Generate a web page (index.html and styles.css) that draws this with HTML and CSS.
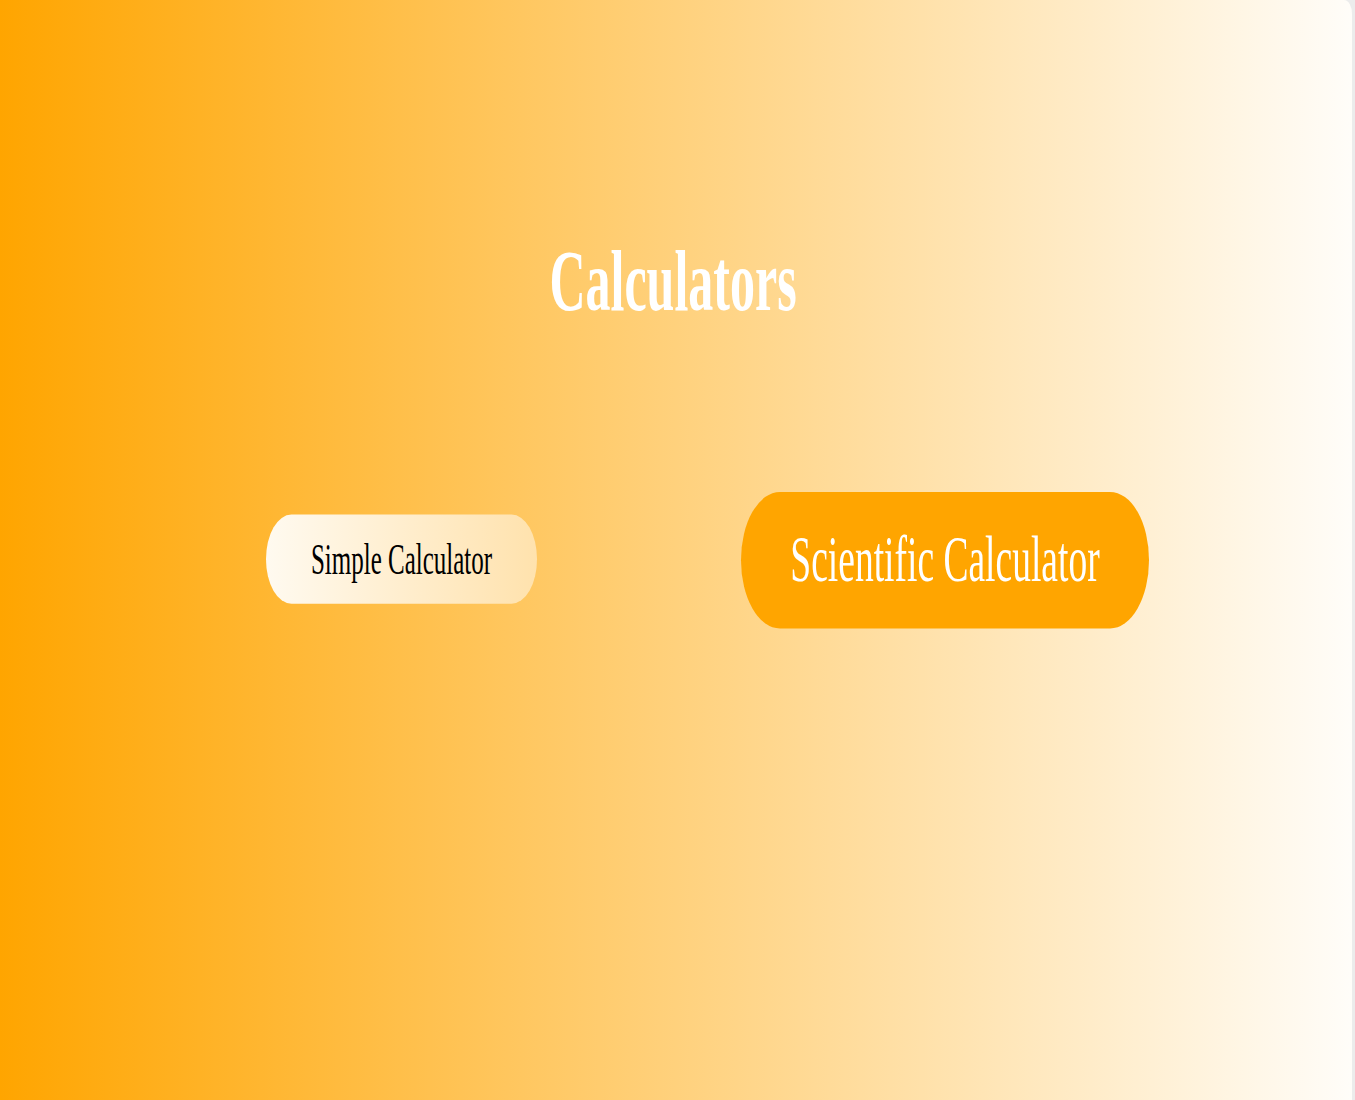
FILE: index.html
```html
<!DOCTYPE html>
<html lang="en">
<head>
<meta charset="utf-8">
<title>Calculators</title>
<link rel="stylesheet" href="styles.css">
</head>
<body>
<main class="page">
  <h1 class="title">Calculators</h1>
  <div class="choices">
    <a class="choice choice-simple" href="#">Simple Calculator</a>
    <a class="choice choice-scientific" href="#">Scientific Calculator</a>
  </div>
</main>
</body>
</html>
```

FILE: styles.css
```css
html, body {
  margin: 0;
  padding: 0;
}

body {
  background: #ececec;
  width: 1355px;
  height: 1100px;
  overflow: hidden;
  font-family: "Liberation Serif", "Times New Roman", serif;
}

.page {
  width: 1352px;
  height: 628.6px;
  box-sizing: border-box;
  background: linear-gradient(to right, #ffa500 0%, #fffdf9 100%);
  border-top-right-radius: 8px;
  transform: scaleY(1.75);
  transform-origin: 0 0;
  display: flex;
  flex-direction: column;
  align-items: center;
  padding-top: 131px;
}

.title {
  margin: 0;
  padding-right: 6px;
  font-size: 50px;
  font-weight: bold;
  line-height: 58px;
  color: #ffffff;
}

.choices {
  margin-top: 104.7px;
  display: flex;
  justify-content: center;
  align-items: center;
  gap: 272px;
  width: 100%;
  padding-right: 5px;
  box-sizing: border-box;
}

.choice {
  display: block;
  width: 271px;
  box-sizing: border-box;
  padding: 12px 0;
  text-align: center;
  font-size: 25px;
  line-height: 27.7px;
  text-decoration: none;
  border-radius: 26px;
}

.choice-simple {
  color: #000000;
  background: linear-gradient(to right, #fffaf0, #ffe2ad);
}

.choice-scientific {
  width: 272px;
  color: #ffffff;
  background: #ffa500;
  transform: scale(1.5);
}
```
